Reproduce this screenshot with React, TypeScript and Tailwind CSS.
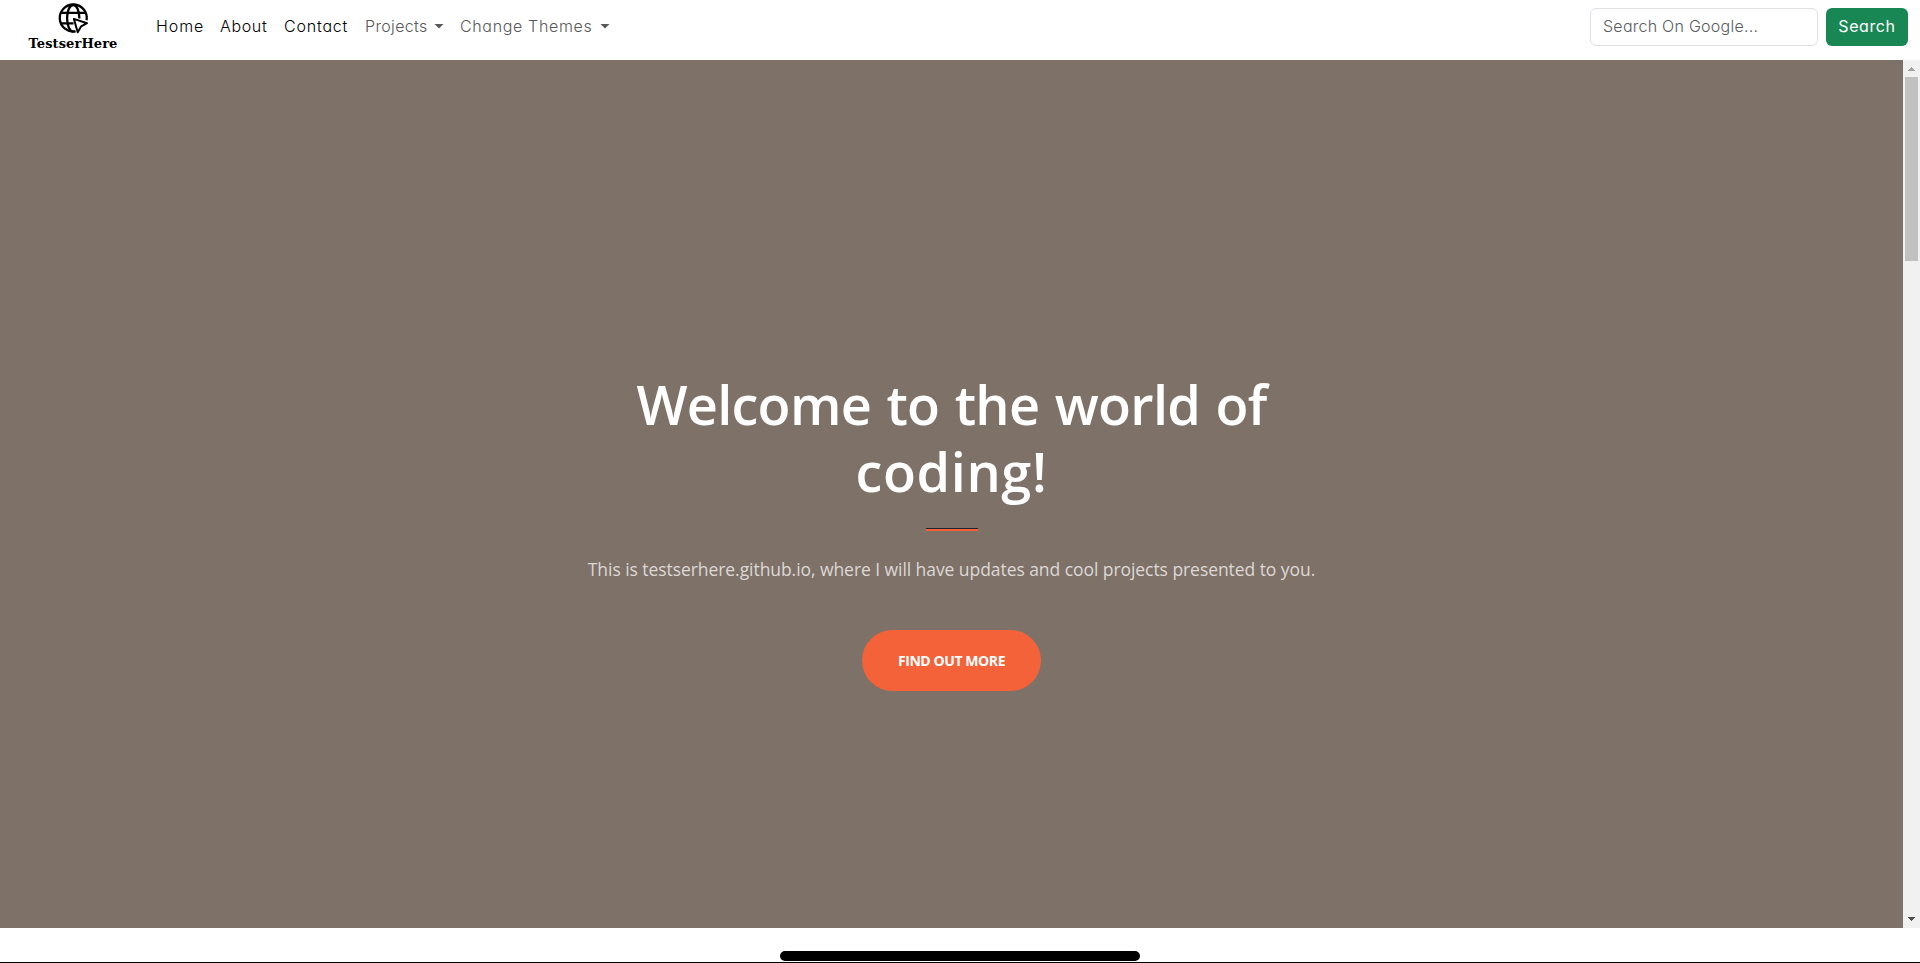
function Logo() {
  return (
    <a href="#" className="flex h-[60px] w-[92px] flex-col items-center pt-[3px] text-black">
      <svg width="31" height="31" viewBox="0 0 31 31" fill="none" stroke="currentColor" strokeWidth="2.3">
        <path d="M28.6 17.2A13.5 13.5 0 1 0 17.6 28.3" />
        <path d="M21.4 15.5C21.2 7.500 18.800 2 15.300 2C11.700 2 9.100 7.800 9.100 15.300C9.100 22.800 11.700 28.600 15.300 28.600" />
        <path d="M3.200 9.800H27.400M3.200 20.400H15.500" />
        <path d="M15.900 15.900L29 20.200L23.200 23.300L19.700 29.200Z" fill="white" strokeWidth="2" strokeLinejoin="round" />
      </svg>
      <span className="mt-0.5 font-['DejaVu_Serif',serif] text-[13px] leading-[16px] font-bold tracking-[0.1px]">TestserHere</span>
    </a>
  );
}

function Caret() {
  return (
    <svg width="10" height="5" viewBox="0 0 10 5" fill="currentColor" className="ml-1 shrink-0">
      <path d="M0.500 0H9.500L5 4.600Z" />
    </svg>
  );
}

export default function App() {
  return (
    <div className="flex h-[963px] flex-col overflow-hidden bg-white">
      <header className="flex h-[60px] shrink-0 items-start pr-3 pl-[27px] font-[Inter,sans-serif] text-base [font-feature-settings:'cv11']">
        <Logo />
        <nav className="mt-[14px] ml-[37px] flex gap-4 leading-6 font-[350] whitespace-nowrap text-black">
          <a href="#" className="w-12 tracking-[0.9px]">Home</a>
          <a href="#" className="w-[48px] tracking-[0.65px]">About</a>
          <a href="#" className="w-[65px] tracking-[0.8px]">Contact</a>
          <a href="#" className="flex w-[79px] items-center text-[#595959]">
            <span className="w-[67px] tracking-[0.35px]">Projects</span>
            <Caret />
          </a>
          <a href="#" className="flex items-center text-[#595959]">
            <span className="w-[136px] tracking-[0.65px]">Change Themes</span>
            <Caret />
          </a>
        </nav>
        <form className="mt-2 ml-auto flex gap-2">
          <input
            type="search"
            placeholder="Search On Google..."
            className="h-[38px] w-[228px] rounded-md border border-[#dee2e6] px-3 pb-0.5 font-[350] tracking-[0.25px] outline-none placeholder:text-[#595c5f]"
          />
          <button type="button" className="h-[38px] w-[82px] rounded-md bg-[#198754] pb-0.5 font-normal tracking-[0.6px] text-white">
            Search
          </button>
        </form>
      </header>

      <main className="flex h-[868px] shrink-0">
        <section className="flex flex-1 flex-col items-center bg-[#7e7167] pt-[311px] text-center font-['Open_Sans',sans-serif]">
          <h1 className="flex flex-col text-[54px] leading-[67px] font-[640] whitespace-nowrap text-white">
            <span className="tracking-[-0.7px] [word-spacing:2px]">Welcome to the world of</span>
            <span className="tracking-[0.6px]">coding!</span>
          </h1>
          <hr className="mt-[23px] h-[3px] w-[52px] border-t border-[#212529] bg-[#f4623a]" />
          <p className="mt-[25px] text-[17.5px] leading-[27px] tracking-[-0.06px] whitespace-nowrap text-[#dcd8d6]">
            This is testserhere.github.io, where I will have updates and cool projects presented to you.
          </p>
          <a
            href="#"
            className="mt-[47px] flex h-[61px] w-[179px] items-center justify-center rounded-full bg-[#f4623a] text-[14px] font-bold tracking-[-0.42px] text-white"
          >
            FIND OUT MORE
          </a>
        </section>
        <aside className="flex w-[17px] flex-col items-center bg-[#f1f1f1]">
          <svg width="17" height="17" viewBox="0 0 17 17" fill="#a3a3a3">
            <path d="M5 11V10H6V9H7V8H8V7H9V8H10V9H11V10H12V11Z" />
          </svg>
          <div className="h-[184px] w-[13px] bg-[#c1c1c1]" />
          <svg className="mt-auto" width="17" height="17" viewBox="0 0 17 17" fill="#505050">
            <path d="M5 6V7H6V8H7V9H8V10H9V9H10V8H11V7H12V6Z" />
          </svg>
        </aside>
      </main>

      <footer className="flex flex-1 justify-center border-b border-black pt-[23px]">
        <div className="h-[10px] w-[360px] rounded-full bg-black" />
      </footer>
    </div>
  );
}
